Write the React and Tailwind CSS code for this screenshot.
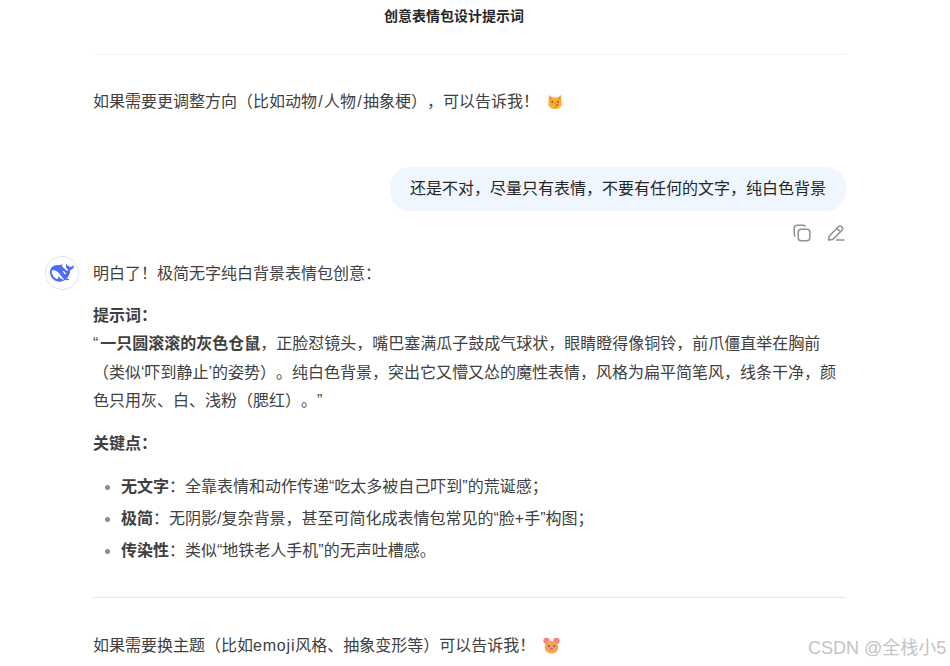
import React from 'react';

const fontStack = 'font-["Liberation_Sans","Noto_Sans_CJK_SC",sans-serif]';

const CatEmoji = () => (
  <svg width="16" height="16" viewBox="0 0 16 16" className="block">
    <path d="M2 1 L5.5 3.5 H10.5 L14 1 L14.5 9 Q14.5 15 8 15 Q1.5 15 1.5 9 Z" fill="#fbab2f" />
    <path d="M2.8 2.6 L5 4.6 L3 5.8 Z M13.2 2.6 L11 4.6 L13 5.8 Z" fill="#f58a3c" />
    <rect x="4.5" y="7" width="1.6" height="1.6" fill="#7a4a1a" />
    <rect x="10" y="7" width="1.6" height="1.6" fill="#7a4a1a" />
    <path d="M7 9 H9 L8 10.6 Z" fill="#f0609a" />
    <path d="M10.8 10 L9.2 12.4" stroke="#7a4a1a" strokeWidth="1" />
    <path d="M0 8.5 H2 M0 11 H2 M14 8.5 H16 M14 11 H16" stroke="#f6c7a0" strokeWidth="0.8" />
  </svg>
);

const MouseEmoji = () => (
  <svg width="17" height="17" viewBox="0 0 16 16" className="block">
    <circle cx="3.3" cy="3.6" r="3" fill="#f98080" />
    <circle cx="12.7" cy="3.6" r="3" fill="#f98080" />
    <ellipse cx="8" cy="9.6" rx="6.4" ry="6" fill="#f4a259" />
    <circle cx="5.5" cy="8.5" r="0.8" fill="#6b3d14" />
    <circle cx="10.5" cy="8.5" r="0.8" fill="#6b3d14" />
    <ellipse cx="8" cy="11" rx="1.3" ry="1" fill="#ec4a7a" />
  </svg>
);

const WhaleLogo = () => (
  <svg width="24" height="24" viewBox="0 0 24 24">
    <path
      fill="#4d6bfe"
      fillRule="evenodd"
      d="M23.748 4.482c-.254-.124-.364.113-.512.234-.051.039-.094.09-.137.136-.372.397-.806.657-1.373.626-.829-.046-1.537.214-2.163.848-.133-.782-.575-1.248-1.247-1.548-.352-.156-.708-.311-.955-.65-.172-.241-.219-.51-.305-.774-.055-.16-.11-.323-.293-.35-.2-.031-.278.136-.356.276-.313.572-.434 1.202-.422 1.84.027 1.436.633 2.58 1.838 3.393.137.093.172.187.129.323-.082.28-.18.552-.266.833-.055.179-.137.217-.329.14a5.526 5.526 0 01-1.736-1.18c-.857-.828-1.631-1.742-2.597-2.458a11.365 11.365 0 00-.689-.471c-.985-.957.13-1.743.388-1.836.27-.098.093-.432-.779-.428-.872.004-1.67.295-2.687.684a3.055 3.055 0 01-.465.137 9.597 9.597 0 00-2.883-.102c-1.885.21-3.39 1.102-4.497 2.623C.082 8.606-.231 10.684.152 12.85c.403 2.284 1.569 4.175 3.36 5.653 1.858 1.533 3.997 2.284 6.438 2.14 1.482-.085 3.133-.284 4.994-1.86.47.234.962.327 1.78.397.63.059 1.236-.03 1.705-.128.735-.156.684-.837.419-.961-2.155-1.004-1.682-.595-2.113-.926 1.096-1.296 2.746-2.642 3.392-7.003.05-.347.007-.565 0-.845-.004-.17.035-.237.23-.256a4.173 4.173 0 001.545-.475c1.396-.763 1.96-2.015 2.093-3.517.02-.23-.004-.467-.247-.588zM11.581 18c-2.089-1.642-3.102-2.183-3.52-2.16-.392.024-.321.471-.235.763.09.288.207.486.371.739.114.167.192.416-.113.603-.673.416-1.842-.14-1.897-.167-1.361-.802-2.5-1.86-3.301-3.307-.774-1.393-1.224-2.887-1.298-4.482-.02-.386.093-.522.477-.592a4.696 4.696 0 011.529-.039c2.132.312 3.946 1.265 5.468 2.774.868.86 1.525 1.887 2.202 2.891.72 1.066 1.494 2.082 2.48 2.914.348.292.625.514.891.677-.802.09-2.14.11-3.054-.614zm1-6.44a.306.306 0 01.415-.287.302.302 0 01.2.288.306.306 0 01-.31.307.303.303 0 01-.304-.308zm3.11 1.596c-.2.081-.399.151-.59.16a1.245 1.245 0 01-.798-.254c-.274-.23-.47-.358-.552-.758a1.73 1.73 0 01.016-.588c.07-.327-.008-.537-.239-.727-.187-.156-.426-.199-.688-.199a.559.559 0 01-.254-.078c-.11-.054-.2-.19-.114-.358.028-.054.16-.186.192-.21.356-.202.767-.136 1.146.016.352.144.618.408 1.001.782.391.451.462.576.685.914.176.265.336.537.445.848.067.195-.019.354-.25.452z"
    />
  </svg>
);

const CopyIcon = () => (
  <svg width="18" height="18" viewBox="0 0 18 18" fill="none" stroke="#909090" strokeWidth="1.5">
    <rect x="5.2" y="5.2" width="11.6" height="11.6" rx="3" />
    <path d="M12.4 2.6 C12 1.6 11.2 1.2 10.2 1.2 H4.2 C2.4 1.2 1.2 2.4 1.2 4.2 V10.2 C1.2 11.2 1.7 12 2.6 12.4" />
  </svg>
);

const EditIcon = () => (
  <svg width="18" height="18" viewBox="0 0 18 18" fill="none" stroke="#909090" strokeWidth="1.5" strokeLinejoin="round">
    <path d="M1.5 16 L2.3 12 L11.2 3 C12.2 2 13.6 1.8 14.8 2.8 C16 3.8 15.8 5.2 15 6.2 L5.8 15.4 Z" />
    <path d="M9.8 4.4 L13.6 7.8" />
    <path d="M9 16 H17.5" />
  </svg>
);

const Slash = () => <span className="px-[1.25px]">/</span>;

const points = [
  { title: '无文字', body: '：全靠表情和动作传递“吃太多被自己吓到”的荒诞感；' },
  { title: '极简', body: '：无阴影/复杂背景，甚至可简化成表情包常见的“脸+手”构图；' },
  { title: '传染性', body: '：类似“地铁老人手机”的无声吐槽感。' },
];

export default function App() {
  return (
    <div className={`relative h-[666px] w-[950px] overflow-hidden bg-white text-base leading-7 text-[#404040] [text-spacing-trim:space-all] ${fontStack}`}>
      {/* sticky title */}
      <div className="h-[30px] pr-[42px] text-center text-sm font-semibold leading-[32px] text-[#262626]">
        创意表情包设计提示词
      </div>

      <div className="ml-[94px] w-[752px]">
        <div className="mt-6 border-t border-[#f0f0f0]" />
        <p className="mt-[33px] flex items-center -ml-px">
          <span>如果需要更调整方向（比如动物<Slash />人物<Slash />抽象梗），可以告诉我！</span>
          <span className="ml-2"><CatEmoji /></span>
        </p>

        <div className="mt-[51px] flex justify-end">
          <div className="rounded-[20px] bg-[#eff6ff] px-5 py-2 text-[#262626]">
            还是不对，尽量只有表情，不要有任何的文字，纯白色背景
          </div>
        </div>
        <div className="mt-[13px] flex h-[18px] justify-end gap-4 pr-px">
          <CopyIcon />
          <EditIcon />
        </div>
      </div>

      <div className="mt-[14px] flex pl-[45px]">
        <div className="flex h-[34px] w-[34px] shrink-0 items-center justify-center rounded-full border border-[#d6e4ff]">
          <WhaleLogo />
        </div>
        <div className="ml-[14px] mt-1 w-[752px]">
          <p>明白了！极简无字纯白背景表情包创意：</p>
          <p className="mt-3.5 leading-[28.4px]">
            <strong className="font-semibold">提示词：</strong>
            <br />
            <span className="mr-0.5">“</span><strong className="font-semibold">一只圆滚滚的灰色仓鼠</strong>，正脸怼镜头，嘴巴塞满瓜子鼓成气球状，眼睛瞪得像铜铃，前爪僵直举在胸前（类似‘吓到静止’的姿势）。纯白色背景，突出它又懵又怂的魔性表情，风格为扁平简笔风，线条干净，颜色只用灰、白、浅粉（腮红）。”
          </p>
          <p className="mt-3.5 font-semibold">关键点：</p>
          <ul className="mt-[15px] list-disc pl-7 marker:text-[#8c8c8c]">
            {points.map((item) => (
              <li key={item.title} className="mb-1">
                <strong className="font-semibold">{item.title}</strong>
                {item.body}
              </li>
            ))}
          </ul>
          <div className="mt-8 border-t border-[#e5e5e5]" />
          <p className="mt-[34px] flex items-center">
            <span>如果需要换主题（比如<span className="tracking-[0.8px]">emoji</span>风格、抽象变形等）可以告诉我！</span>
            <span className="ml-2"><MouseEmoji /></span>
          </p>
        </div>
      </div>

      <div className="absolute left-[808px] top-[636px] whitespace-nowrap text-lg leading-6 text-[#c4c4c4]">
        CSDN @全栈小5
      </div>
    </div>
  );
}
